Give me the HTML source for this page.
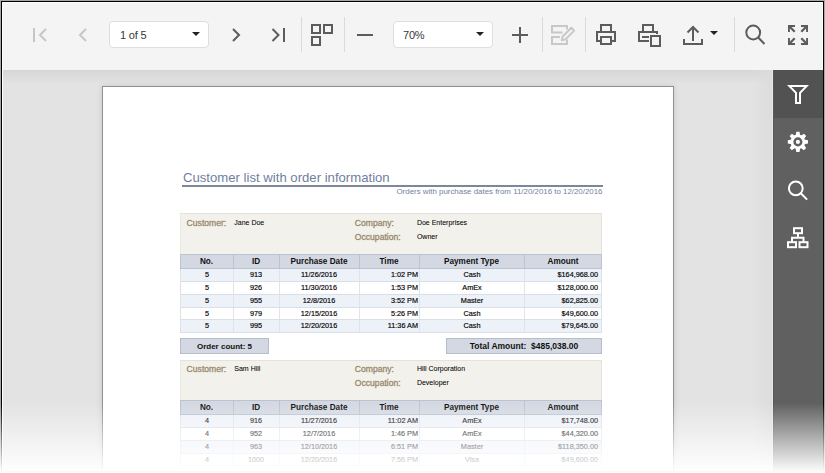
<!DOCTYPE html>
<html><head><meta charset="utf-8">
<style>
html,body{margin:0;padding:0;}
body{width:825px;height:473px;overflow:hidden;position:relative;background:#f4f4f4;font-family:"Liberation Sans",sans-serif;}
.abs{position:absolute;}
#toolbar{left:0;top:0;width:825px;height:70px;background:#f4f4f4;}
.sep{position:absolute;top:17px;width:1px;height:35px;background:#dadada;}
.dd{position:absolute;top:21px;height:27px;box-sizing:border-box;border:1px solid #dedede;border-radius:4px;background:#fff;}
.dd span{position:absolute;left:9px;top:7px;font-size:11px;color:#383838;letter-spacing:-0.2px;}
#viewer{left:0;top:70px;width:773px;height:403px;background:#e3e3e3;}
#vshadow{left:0;top:70px;width:773px;height:14px;background:linear-gradient(#d6d6d6,rgba(227,227,227,0));}
#sshadow{left:752px;top:70px;width:20px;height:403px;background:linear-gradient(to right,rgba(220,220,220,0),#dcdcdc);}
#sidebar{left:773px;top:70px;width:52px;height:403px;background:#606060;}
#tab1{left:773px;top:70px;width:52px;height:48px;background:#525252;}
#page{left:102px;top:86px;width:572px;height:420px;box-sizing:border-box;border:1px solid #8f8f8f;background:#fff;box-shadow:0 0 6px rgba(0,0,0,0.12);}
.t{position:absolute;white-space:nowrap;line-height:1;}
.dk{-webkit-text-stroke:0.16px #000;}
.dk2{-webkit-text-stroke:0.05px #000;}
#frame{left:0;top:0;width:825px;height:473px;box-sizing:border-box;box-shadow:inset 0 0 0 1px #a8a8a8,inset 0 0 0 2px #000;pointer-events:none;}
#fade{left:0;top:403px;width:825px;height:70px;background:linear-gradient(rgba(255,255,255,0),#fff);}
.info{position:absolute;left:180px;width:422px;background:#f3f1ec;border-top:1px solid #e6e2d9;border-left:1px solid #ebe8e1;border-right:1px solid #e6e2d9;box-sizing:border-box;}
.lbl{color:#a89c82;font-size:8px;}
.val{color:#000;font-size:6.5px;}
.hdr{position:absolute;left:180px;width:422px;background:#d3d8e2;border:1px solid #bcc3d0;box-sizing:border-box;}
.row{position:absolute;left:180px;width:422px;height:13px;box-sizing:border-box;border-bottom:1px solid #d9dee7;border-left:1px solid #dde2ea;border-right:1px solid #dde2ea;}
.odd{background:#edf1f8;}
.even{background:#fff;}
.c{position:absolute;top:0;height:100%;box-sizing:border-box;font-size:8px;line-height:13px;color:#222;white-space:nowrap;}
.vl{position:absolute;top:0;width:1px;height:100%;background:#dfe4ec;}
.hvl{position:absolute;top:0;width:1px;height:100%;background:#bcc3d0;}
.tot{position:absolute;top:338px;height:16px;box-sizing:border-box;background:#d3d8e2;border:1px solid #b6bdcb;font-weight:bold;font-size:8.5px;line-height:15px;color:#111;text-align:center;}
</style></head><body>
<div id="toolbar" class="abs"></div>
<div class="sep" style="left:301px"></div>
<div class="sep" style="left:344px"></div>
<div class="sep" style="left:542px"></div>
<div class="sep" style="left:585px"></div>
<div class="sep" style="left:734px"></div>
<div class="dd" style="left:109px;width:100px"><span style="left:10px">1 of 5</span></div>
<div class="dd" style="left:393px;width:100px"><span>70%</span></div>
<svg class="abs" style="left:0;top:0" width="825" height="70" viewBox="0 0 825 70">
  <!-- dropdown carets -->
  <path d="M192 32 h8 l-4 4 z" fill="#222"/>
  <path d="M476 32 h8 l-4 4 z" fill="#222"/>
  <!-- first page -->
  <g stroke="#c6c6c6" stroke-width="2" fill="none">
    <path d="M34 28 v14"/>
    <path d="M46 29 L40 35 L46 41"/>
    <path d="M86 29 L80 35 L86 41"/>
  </g>
  <g stroke="#5c5c5c" stroke-width="2" fill="none">
    <path d="M233 29 L239 35 L233 41"/>
    <path d="M272.5 29 L278.5 35 L272.5 41"/>
    <path d="M284 28 v14"/>
    <rect x="312" y="25" width="8" height="8"/>
    <rect x="324" y="25" width="8" height="8"/>
    <rect x="312" y="37" width="8" height="8"/>
    <path d="M357 35 h16"/>
    <path d="M512 35 h16 M520 27 v16"/>
    <!-- print -->
    <path d="M601 31 v-6 h10 v6"/>
    <path d="M601 41 h-4 v-9 h18 v9 h-4"/>
    <rect x="601" y="37" width="10" height="7"/>
    <!-- print page -->
    <path d="M643 31 v-6 h10 v6"/>
    <path d="M649 41 h-10 v-9 h18 v2"/>
    <path d="M642 37 h7"/>
    <rect x="651" y="36" width="9" height="10"/>
    <!-- export -->
    <path d="M693 27 v14"/>
    <path d="M687.5 32.5 l5.5 -5.5 l5.5 5.5"/>
    <path d="M684 39 v5 h18 v-5"/>
    <!-- search -->
    <circle cx="753.2" cy="32.5" r="6.9"/>
    <path d="M758.2 37.5 l6.3 6.5"/>
  </g>
  <path d="M710 31 h8 l-4 4 z" fill="#222"/>
  <!-- edit disabled -->
  <g stroke="#c8c8c8" stroke-width="2" fill="none">
    <path d="M562.5 32.5 h-10.5 v-6.5 h15 v3.5"/>
    <path d="M560 37 h-8 v7 h15 v-4.5"/>
    <path d="M0 0 L3.2 -2 H15.5 V2 H3.2 Z" transform="translate(561.8 40.2) rotate(-45)" stroke-linejoin="round"/>
  </g>
  <!-- fullscreen -->
  <defs><g id="fsa"><path d="M0 0 H7 V1.9 H1.9 V7 H0 Z"/><path d="M1 1 L6.7 6.7" stroke="#5c5c5c" stroke-width="2.3"/></g></defs>
  <g fill="#5c5c5c">
    <use href="#fsa" transform="translate(788 25)"/>
    <use href="#fsa" transform="translate(808 25) scale(-1 1)"/>
    <use href="#fsa" transform="translate(788 45) scale(1 -1)"/>
    <use href="#fsa" transform="translate(808 45) scale(-1 -1)"/>
  </g>
</svg>
<div id="viewer" class="abs"></div>
<div id="vshadow" class="abs"></div>
<div id="sshadow" class="abs"></div>
<div id="sidebar" class="abs"></div>
<div id="tab1" class="abs"></div>
<div class="abs" style="left:773px;top:70px;width:1px;height:403px;background:#575757"></div>
<svg class="abs" style="left:773px;top:70px" width="52" height="200" viewBox="773 70 52 200">
  <g stroke="#fff" stroke-width="2" fill="none">
    
    <circle cx="795.8" cy="188.3" r="6.9"/>
    <path d="M800.8 193.3 l6.3 6.3"/>
    <rect x="794" y="228.2" width="8" height="5"/>
    <rect x="788" y="242.2" width="8" height="5"/>
    <rect x="799.5" y="242.2" width="8" height="5"/>
    <path d="M798 233.7 v4 M792 241.7 v-4 h11.5 v4"/>
  </g>
  <g fill="#fff" transform="translate(797.9 141.9)">
    <circle r="7.3"/><path d="M-2.3 -6 L-1.6 -10.1 H1.6 L2.3 -6 Z" transform="rotate(0)"/><path d="M-2.3 -6 L-1.6 -10.1 H1.6 L2.3 -6 Z" transform="rotate(45)"/><path d="M-2.3 -6 L-1.6 -10.1 H1.6 L2.3 -6 Z" transform="rotate(90)"/><path d="M-2.3 -6 L-1.6 -10.1 H1.6 L2.3 -6 Z" transform="rotate(135)"/><path d="M-2.3 -6 L-1.6 -10.1 H1.6 L2.3 -6 Z" transform="rotate(180)"/><path d="M-2.3 -6 L-1.6 -10.1 H1.6 L2.3 -6 Z" transform="rotate(225)"/><path d="M-2.3 -6 L-1.6 -10.1 H1.6 L2.3 -6 Z" transform="rotate(270)"/><path d="M-2.3 -6 L-1.6 -10.1 H1.6 L2.3 -6 Z" transform="rotate(315)"/>
    <circle r="3.3" fill="none" stroke="#606060" stroke-width="2.5"/>
  </g>
</svg>
<svg class="abs" style="left:773px;top:70px" width="52" height="48" viewBox="773 70 52 48"><path fill="#fff" fill-rule="evenodd" d="M787 85 H809 L801 93.3 V104 H795 V93.3 Z M791.6 87 H804.4 L799 92.6 V102 H797 V92.6 Z"/></svg>
<div class="abs" style="left:772px;top:70px;width:1px;height:403px;background:#e6e6e6"></div>
<div id="page" class="abs"></div>
<!--REPORT-->
<div class="t" style="top:170.57px;font-size:13.15px;color:#7080a0;left:183.00px;">Customer list with order information</div>
<div class="abs" style="left:182px;top:185px;width:421px;height:2px;background:#7b889b"></div>
<div class="t" style="top:187.91px;font-size:7.9px;color:#74829a;left:2.50px;width:600px;text-align:right;">Orders with purchase dates from 11/20/2016 to 12/20/2016</div>
<div class="info" style="top:213px;height:41px"></div>
<div class="t" style="top:218.72px;font-size:8.6px;color:#968869;left:186.60px;-webkit-text-stroke:0.3px #9a8c6e;">Customer:</div>
<div class="t dk2" style="top:219.37px;font-size:7px;color:#000;left:234.30px;">Jane Doe</div>
<div class="t" style="top:218.72px;font-size:8.6px;color:#968869;left:354.80px;-webkit-text-stroke:0.3px #9a8c6e;">Company:</div>
<div class="t dk2" style="top:219.37px;font-size:7px;color:#000;left:416.90px;">Doe Enterprises</div>
<div class="t" style="top:232.82px;font-size:8.6px;color:#968869;left:354.80px;-webkit-text-stroke:0.3px #9a8c6e;">Occupation:</div>
<div class="t dk2" style="top:232.97px;font-size:7px;color:#000;left:416.90px;">Owner</div>
<div class="hdr" style="top:254px;height:15px"><div class="hvl" style="left:52px"></div><div class="hvl" style="left:98px"></div><div class="hvl" style="left:178px"></div><div class="hvl" style="left:238px"></div><div class="hvl" style="left:343px"></div></div>
<div class="t" style="top:257.56px;font-size:8.2px;color:#111;font-weight:700;left:-93.50px;width:600px;text-align:center;">No.</div>
<div class="t" style="top:257.56px;font-size:8.2px;color:#111;font-weight:700;left:-44.00px;width:600px;text-align:center;">ID</div>
<div class="t" style="top:257.56px;font-size:8.2px;color:#111;font-weight:700;left:19.00px;width:600px;text-align:center;">Purchase Date</div>
<div class="t" style="top:257.56px;font-size:8.2px;color:#111;font-weight:700;left:89.00px;width:600px;text-align:center;">Time</div>
<div class="t" style="top:257.56px;font-size:8.2px;color:#111;font-weight:700;left:171.50px;width:600px;text-align:center;">Payment Type</div>
<div class="t" style="top:257.56px;font-size:8.2px;color:#111;font-weight:700;left:263.00px;width:600px;text-align:center;">Amount</div>
<div class="row odd" style="top:269px;height:13px"><div class="vl" style="left:52px"></div><div class="vl" style="left:98px"></div><div class="vl" style="left:178px"></div><div class="vl" style="left:238px"></div><div class="vl" style="left:343px"></div></div>
<div class="t dk" style="top:271.13px;font-size:8px;color:#000;left:-93.50px;width:600px;text-align:center;transform:scaleX(0.91);transform-origin:center center;">5</div>
<div class="t dk" style="top:271.13px;font-size:8px;color:#000;left:-44.00px;width:600px;text-align:center;transform:scaleX(0.91);transform-origin:center center;">913</div>
<div class="t dk" style="top:271.13px;font-size:8px;color:#000;left:19.00px;width:600px;text-align:center;transform:scaleX(0.91);transform-origin:center center;">11/26/2016</div>
<div class="t dk" style="top:271.13px;font-size:8px;color:#000;left:-182.00px;width:600px;text-align:right;transform:scaleX(0.91);transform-origin:right center;">1:02 PM</div>
<div class="t dk" style="top:271.13px;font-size:8px;color:#000;left:171.50px;width:600px;text-align:center;transform:scaleX(0.91);transform-origin:center center;">Cash</div>
<div class="t dk" style="top:271.13px;font-size:8px;color:#000;left:-2.00px;width:600px;text-align:right;transform:scaleX(0.91);transform-origin:right center;">$164,968.00</div>
<div class="row even" style="top:282px;height:13px"><div class="vl" style="left:52px"></div><div class="vl" style="left:98px"></div><div class="vl" style="left:178px"></div><div class="vl" style="left:238px"></div><div class="vl" style="left:343px"></div></div>
<div class="t dk" style="top:284.13px;font-size:8px;color:#000;left:-93.50px;width:600px;text-align:center;transform:scaleX(0.91);transform-origin:center center;">5</div>
<div class="t dk" style="top:284.13px;font-size:8px;color:#000;left:-44.00px;width:600px;text-align:center;transform:scaleX(0.91);transform-origin:center center;">926</div>
<div class="t dk" style="top:284.13px;font-size:8px;color:#000;left:19.00px;width:600px;text-align:center;transform:scaleX(0.91);transform-origin:center center;">11/30/2016</div>
<div class="t dk" style="top:284.13px;font-size:8px;color:#000;left:-182.00px;width:600px;text-align:right;transform:scaleX(0.91);transform-origin:right center;">1:53 PM</div>
<div class="t dk" style="top:284.13px;font-size:8px;color:#000;left:171.50px;width:600px;text-align:center;transform:scaleX(0.91);transform-origin:center center;">AmEx</div>
<div class="t dk" style="top:284.13px;font-size:8px;color:#000;left:-2.00px;width:600px;text-align:right;transform:scaleX(0.91);transform-origin:right center;">$128,000.00</div>
<div class="row odd" style="top:295px;height:13px"><div class="vl" style="left:52px"></div><div class="vl" style="left:98px"></div><div class="vl" style="left:178px"></div><div class="vl" style="left:238px"></div><div class="vl" style="left:343px"></div></div>
<div class="t dk" style="top:297.13px;font-size:8px;color:#000;left:-93.50px;width:600px;text-align:center;transform:scaleX(0.91);transform-origin:center center;">5</div>
<div class="t dk" style="top:297.13px;font-size:8px;color:#000;left:-44.00px;width:600px;text-align:center;transform:scaleX(0.91);transform-origin:center center;">955</div>
<div class="t dk" style="top:297.13px;font-size:8px;color:#000;left:19.00px;width:600px;text-align:center;transform:scaleX(0.91);transform-origin:center center;">12/8/2016</div>
<div class="t dk" style="top:297.13px;font-size:8px;color:#000;left:-182.00px;width:600px;text-align:right;transform:scaleX(0.91);transform-origin:right center;">3:52 PM</div>
<div class="t dk" style="top:297.13px;font-size:8px;color:#000;left:171.50px;width:600px;text-align:center;transform:scaleX(0.91);transform-origin:center center;">Master</div>
<div class="t dk" style="top:297.13px;font-size:8px;color:#000;left:-2.00px;width:600px;text-align:right;transform:scaleX(0.91);transform-origin:right center;">$62,825.00</div>
<div class="row even" style="top:308px;height:12px"><div class="vl" style="left:52px"></div><div class="vl" style="left:98px"></div><div class="vl" style="left:178px"></div><div class="vl" style="left:238px"></div><div class="vl" style="left:343px"></div></div>
<div class="t dk" style="top:310.13px;font-size:8px;color:#000;left:-93.50px;width:600px;text-align:center;transform:scaleX(0.91);transform-origin:center center;">5</div>
<div class="t dk" style="top:310.13px;font-size:8px;color:#000;left:-44.00px;width:600px;text-align:center;transform:scaleX(0.91);transform-origin:center center;">979</div>
<div class="t dk" style="top:310.13px;font-size:8px;color:#000;left:19.00px;width:600px;text-align:center;transform:scaleX(0.91);transform-origin:center center;">12/15/2016</div>
<div class="t dk" style="top:310.13px;font-size:8px;color:#000;left:-182.00px;width:600px;text-align:right;transform:scaleX(0.91);transform-origin:right center;">5:26 PM</div>
<div class="t dk" style="top:310.13px;font-size:8px;color:#000;left:171.50px;width:600px;text-align:center;transform:scaleX(0.91);transform-origin:center center;">Cash</div>
<div class="t dk" style="top:310.13px;font-size:8px;color:#000;left:-2.00px;width:600px;text-align:right;transform:scaleX(0.91);transform-origin:right center;">$49,600.00</div>
<div class="row odd" style="top:320px;height:13px"><div class="vl" style="left:52px"></div><div class="vl" style="left:98px"></div><div class="vl" style="left:178px"></div><div class="vl" style="left:238px"></div><div class="vl" style="left:343px"></div></div>
<div class="t dk" style="top:322.13px;font-size:8px;color:#000;left:-93.50px;width:600px;text-align:center;transform:scaleX(0.91);transform-origin:center center;">5</div>
<div class="t dk" style="top:322.13px;font-size:8px;color:#000;left:-44.00px;width:600px;text-align:center;transform:scaleX(0.91);transform-origin:center center;">995</div>
<div class="t dk" style="top:322.13px;font-size:8px;color:#000;left:19.00px;width:600px;text-align:center;transform:scaleX(0.91);transform-origin:center center;">12/20/2016</div>
<div class="t dk" style="top:322.13px;font-size:8px;color:#000;left:-182.00px;width:600px;text-align:right;transform:scaleX(0.91);transform-origin:right center;">11:36 AM</div>
<div class="t dk" style="top:322.13px;font-size:8px;color:#000;left:171.50px;width:600px;text-align:center;transform:scaleX(0.91);transform-origin:center center;">Cash</div>
<div class="t dk" style="top:322.13px;font-size:8px;color:#000;left:-2.00px;width:600px;text-align:right;transform:scaleX(0.91);transform-origin:right center;">$79,645.00</div>
<div class="tot" style="left:180px;width:89px;font-size:8px">Order count: 5</div>
<div class="tot" style="left:446px;width:156px">Total Amount:&nbsp; $485,038.00</div>
<div class="tot" style="top:471px;left:446px;width:156px"></div>
<div class="info" style="top:360px;height:40px"></div>
<div class="t" style="top:364.72px;font-size:8.6px;color:#968869;left:186.60px;-webkit-text-stroke:0.3px #9a8c6e;">Customer:</div>
<div class="t dk2" style="top:365.37px;font-size:7px;color:#000;left:234.30px;">Sam Hill</div>
<div class="t" style="top:364.72px;font-size:8.6px;color:#968869;left:354.80px;-webkit-text-stroke:0.3px #9a8c6e;">Company:</div>
<div class="t dk2" style="top:365.37px;font-size:7px;color:#000;left:416.90px;">Hill Corporation</div>
<div class="t" style="top:378.82px;font-size:8.6px;color:#968869;left:354.80px;-webkit-text-stroke:0.3px #9a8c6e;">Occupation:</div>
<div class="t dk2" style="top:378.97px;font-size:7px;color:#000;left:416.90px;">Developer</div>
<div class="hdr" style="top:400px;height:15px"><div class="hvl" style="left:52px"></div><div class="hvl" style="left:98px"></div><div class="hvl" style="left:178px"></div><div class="hvl" style="left:238px"></div><div class="hvl" style="left:343px"></div></div>
<div class="t" style="top:403.56px;font-size:8.2px;color:#111;font-weight:700;left:-93.50px;width:600px;text-align:center;">No.</div>
<div class="t" style="top:403.56px;font-size:8.2px;color:#111;font-weight:700;left:-44.00px;width:600px;text-align:center;">ID</div>
<div class="t" style="top:403.56px;font-size:8.2px;color:#111;font-weight:700;left:19.00px;width:600px;text-align:center;">Purchase Date</div>
<div class="t" style="top:403.56px;font-size:8.2px;color:#111;font-weight:700;left:89.00px;width:600px;text-align:center;">Time</div>
<div class="t" style="top:403.56px;font-size:8.2px;color:#111;font-weight:700;left:171.50px;width:600px;text-align:center;">Payment Type</div>
<div class="t" style="top:403.56px;font-size:8.2px;color:#111;font-weight:700;left:263.00px;width:600px;text-align:center;">Amount</div>
<div class="row odd" style="top:415px;height:13px"><div class="vl" style="left:52px"></div><div class="vl" style="left:98px"></div><div class="vl" style="left:178px"></div><div class="vl" style="left:238px"></div><div class="vl" style="left:343px"></div></div>
<div class="t dk" style="top:417.13px;font-size:8px;color:#000;left:-93.50px;width:600px;text-align:center;transform:scaleX(0.91);transform-origin:center center;">4</div>
<div class="t dk" style="top:417.13px;font-size:8px;color:#000;left:-44.00px;width:600px;text-align:center;transform:scaleX(0.91);transform-origin:center center;">916</div>
<div class="t dk" style="top:417.13px;font-size:8px;color:#000;left:19.00px;width:600px;text-align:center;transform:scaleX(0.91);transform-origin:center center;">11/27/2016</div>
<div class="t dk" style="top:417.13px;font-size:8px;color:#000;left:-182.00px;width:600px;text-align:right;transform:scaleX(0.91);transform-origin:right center;">11:02 AM</div>
<div class="t dk" style="top:417.13px;font-size:8px;color:#000;left:171.50px;width:600px;text-align:center;transform:scaleX(0.91);transform-origin:center center;">AmEx</div>
<div class="t dk" style="top:417.13px;font-size:8px;color:#000;left:-2.00px;width:600px;text-align:right;transform:scaleX(0.91);transform-origin:right center;">$17,748.00</div>
<div class="row even" style="top:428px;height:13px"><div class="vl" style="left:52px"></div><div class="vl" style="left:98px"></div><div class="vl" style="left:178px"></div><div class="vl" style="left:238px"></div><div class="vl" style="left:343px"></div></div>
<div class="t dk" style="top:430.13px;font-size:8px;color:#000;left:-93.50px;width:600px;text-align:center;transform:scaleX(0.91);transform-origin:center center;">4</div>
<div class="t dk" style="top:430.13px;font-size:8px;color:#000;left:-44.00px;width:600px;text-align:center;transform:scaleX(0.91);transform-origin:center center;">952</div>
<div class="t dk" style="top:430.13px;font-size:8px;color:#000;left:19.00px;width:600px;text-align:center;transform:scaleX(0.91);transform-origin:center center;">12/7/2016</div>
<div class="t dk" style="top:430.13px;font-size:8px;color:#000;left:-182.00px;width:600px;text-align:right;transform:scaleX(0.91);transform-origin:right center;">1:46 PM</div>
<div class="t dk" style="top:430.13px;font-size:8px;color:#000;left:171.50px;width:600px;text-align:center;transform:scaleX(0.91);transform-origin:center center;">AmEx</div>
<div class="t dk" style="top:430.13px;font-size:8px;color:#000;left:-2.00px;width:600px;text-align:right;transform:scaleX(0.91);transform-origin:right center;">$44,320.00</div>
<div class="row odd" style="top:441px;height:13px"><div class="vl" style="left:52px"></div><div class="vl" style="left:98px"></div><div class="vl" style="left:178px"></div><div class="vl" style="left:238px"></div><div class="vl" style="left:343px"></div></div>
<div class="t dk" style="top:443.13px;font-size:8px;color:#000;left:-93.50px;width:600px;text-align:center;transform:scaleX(0.91);transform-origin:center center;">4</div>
<div class="t dk" style="top:443.13px;font-size:8px;color:#000;left:-44.00px;width:600px;text-align:center;transform:scaleX(0.91);transform-origin:center center;">963</div>
<div class="t dk" style="top:443.13px;font-size:8px;color:#000;left:19.00px;width:600px;text-align:center;transform:scaleX(0.91);transform-origin:center center;">12/10/2016</div>
<div class="t dk" style="top:443.13px;font-size:8px;color:#000;left:-182.00px;width:600px;text-align:right;transform:scaleX(0.91);transform-origin:right center;">6:51 PM</div>
<div class="t dk" style="top:443.13px;font-size:8px;color:#000;left:171.50px;width:600px;text-align:center;transform:scaleX(0.91);transform-origin:center center;">Master</div>
<div class="t dk" style="top:443.13px;font-size:8px;color:#000;left:-2.00px;width:600px;text-align:right;transform:scaleX(0.91);transform-origin:right center;">$118,350.00</div>
<div class="row even" style="top:454px;height:12px"><div class="vl" style="left:52px"></div><div class="vl" style="left:98px"></div><div class="vl" style="left:178px"></div><div class="vl" style="left:238px"></div><div class="vl" style="left:343px"></div></div>
<div class="t dk" style="top:456.13px;font-size:8px;color:#000;left:-93.50px;width:600px;text-align:center;transform:scaleX(0.91);transform-origin:center center;">4</div>
<div class="t dk" style="top:456.13px;font-size:8px;color:#000;left:-44.00px;width:600px;text-align:center;transform:scaleX(0.91);transform-origin:center center;">1000</div>
<div class="t dk" style="top:456.13px;font-size:8px;color:#000;left:19.00px;width:600px;text-align:center;transform:scaleX(0.91);transform-origin:center center;">12/20/2016</div>
<div class="t dk" style="top:456.13px;font-size:8px;color:#000;left:-182.00px;width:600px;text-align:right;transform:scaleX(0.91);transform-origin:right center;">7:56 PM</div>
<div class="t dk" style="top:456.13px;font-size:8px;color:#000;left:171.50px;width:600px;text-align:center;transform:scaleX(0.91);transform-origin:center center;">Visa</div>
<div class="t dk" style="top:456.13px;font-size:8px;color:#000;left:-2.00px;width:600px;text-align:right;transform:scaleX(0.91);transform-origin:right center;">$49,600.00</div>
<!--/REPORT-->

<div class="abs" style="left:2px;top:2px;width:821px;height:1px;background:#fff"></div>
<div class="abs" style="left:2px;top:2px;width:1px;height:471px;background:#fff"></div>
<div class="abs" style="left:822px;top:2px;width:1px;height:68px;background:#fff"></div>
<div id="frame" class="abs"></div>
<div id="fade" class="abs"></div>
</body></html>
